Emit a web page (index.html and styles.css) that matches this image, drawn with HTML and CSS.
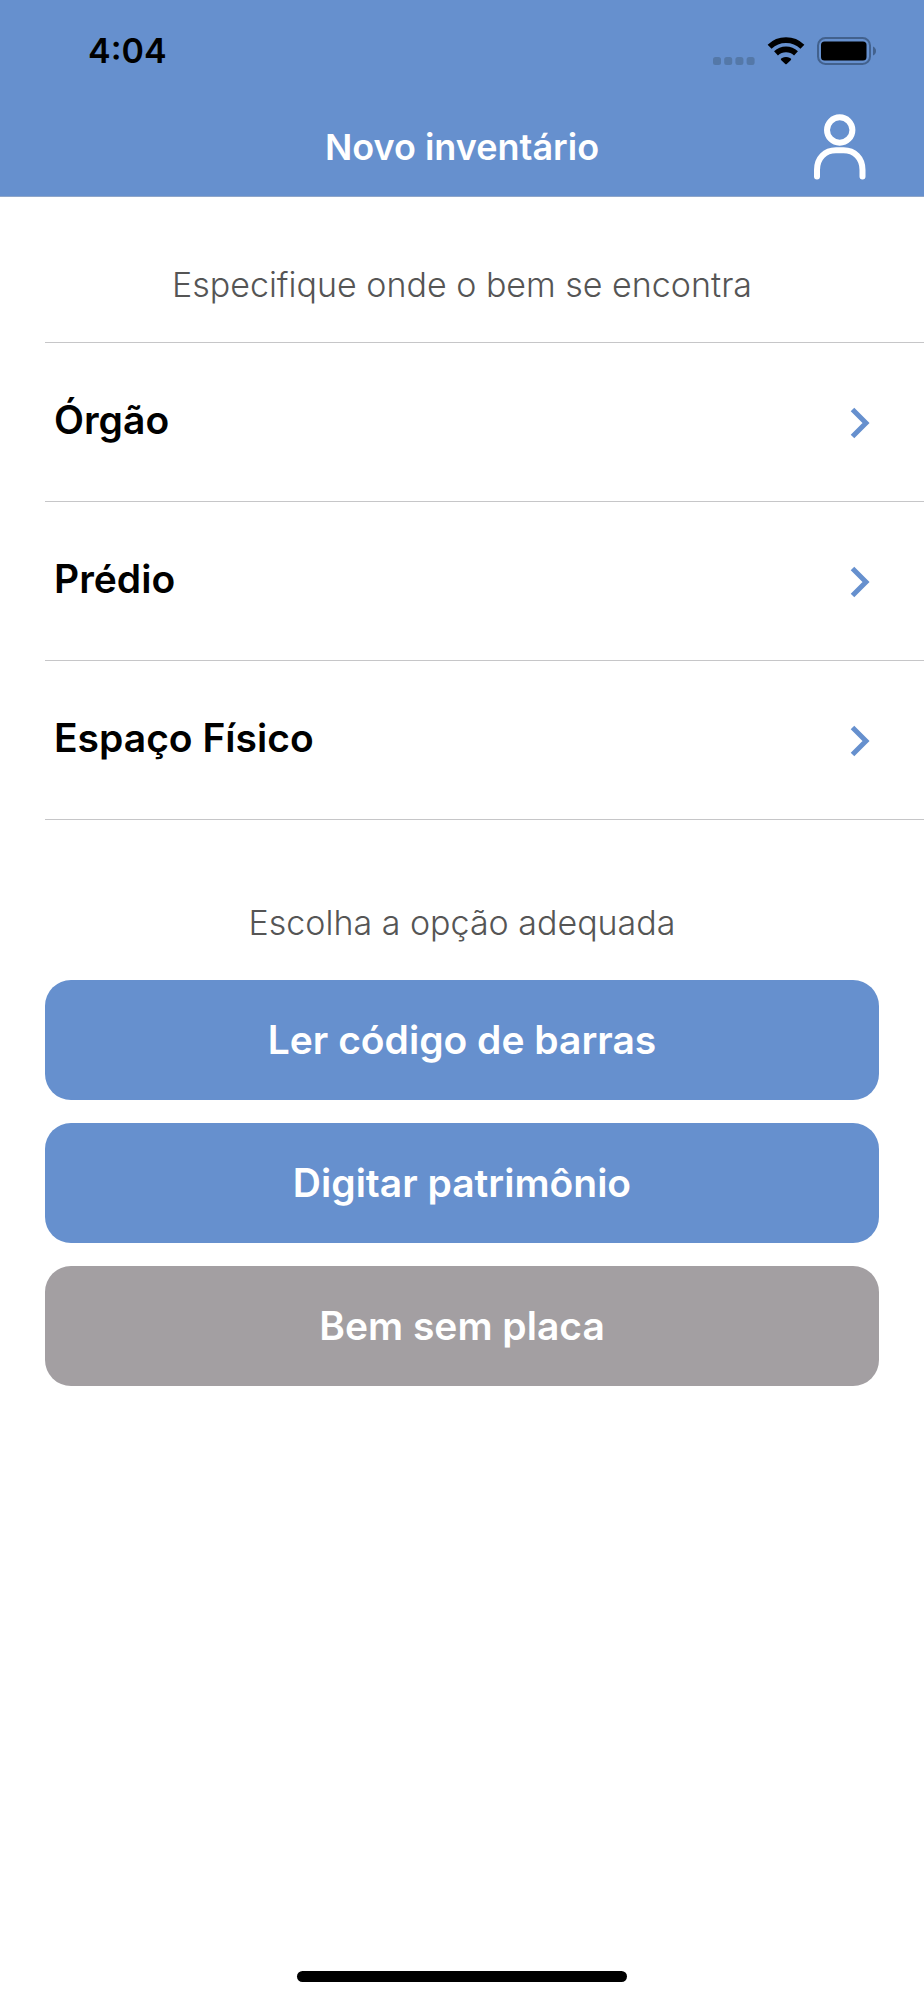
FILE: index.html
```
<!DOCTYPE html>
<html lang="pt-BR">
<head>
<meta charset="utf-8">
<meta name="viewport" content="width=device-width, initial-scale=1">
<title>Novo inventário</title>
<link rel="stylesheet" href="styles.css">
</head>
<body>
<header class="header">
  <div class="status">
    <time class="clock">4:04</time>
    <div class="indicators">
      <svg class="dots" width="42" height="8" viewBox="0 0 42 8" aria-hidden="true"><rect width="8" height="8" rx="2.5"/><rect x="11.2" width="8" height="8" rx="2.5"/><rect x="22.4" width="8" height="8" rx="2.5"/><rect x="33.6" width="8" height="8" rx="2.5"/></svg>
      <svg class="wifi" width="38" height="28" viewBox="0 0 38 28" aria-hidden="true">
        <g fill="none" stroke="#000" stroke-width="5.6">
          <path d="M2.600 9.800a23.500 23.500 0 0 1 32.800 0"/>
          <path d="M9 16.400a14.500 14.500 0 0 1 20 0"/>
        </g>
        <path d="M13.800 22.100Q14.200 21.400 15 21Q19 19 23 21Q23.800 21.400 24.200 22.100Q24.200 22.700 23.700 23.200L19.700 27Q19 27.500 18.300 27L14.300 23.200Q13.800 22.700 13.800 22.100Z"/>
      </svg>
      <svg class="battery" width="60" height="28" viewBox="0 0 60 28" aria-hidden="true">
        <rect x="1" y="1" width="52" height="26" rx="7.500" fill="none" stroke="#42618d" stroke-width="2"/>
        <rect x="4" y="4.500" width="45.500" height="19" rx="3.500"/>
        <path d="M56 9.500Q59 11 59 14T56 18.500Z" fill="#42618d"/>
      </svg>
    </div>
  </div>
  <div class="nav">
    <h1 class="title">Novo inventário</h1>
    <button class="profile" type="button" aria-label="Perfil">
      <svg width="52" height="66" viewBox="0 0 52 66" fill="none" stroke="#fff" stroke-width="6" stroke-linecap="round" aria-hidden="true"><circle cx="25.700" cy="16" r="12.700"/><path d="M3 62.500V56C3 44 11 36.300 22 36.300H29.500C40.500 36.300 48.500 44 48.500 56V62.500"/></svg>
    </button>
  </div>
</header>
<main class="content">
  <section>
    <h2 class="caption">Especifique onde o bem se encontra</h2>
    <ul class="list">
      <li><button class="row" type="button"><span class="label">Órgão</span><svg class="chevron" width="20" height="32" viewBox="0 0 20 32" aria-hidden="true"><path d="M2.500 2.500L16 16L2.500 29.500"/></svg></button></li>
      <li><button class="row" type="button"><span class="label">Prédio</span><svg class="chevron" width="20" height="32" viewBox="0 0 20 32" aria-hidden="true"><path d="M2.500 2.500L16 16L2.500 29.500"/></svg></button></li>
      <li><button class="row" type="button"><span class="label">Espaço Físico</span><svg class="chevron" width="20" height="32" viewBox="0 0 20 32" aria-hidden="true"><path d="M2.500 2.500L16 16L2.500 29.500"/></svg></button></li>
    </ul>
  </section>
  <section class="options">
    <h2 class="caption">Escolha a opção adequada</h2>
    <div class="actions">
      <button class="action" type="button">Ler código de barras</button>
      <button class="action" type="button">Digitar patrimônio</button>
      <button class="action muted" type="button">Bem sem placa</button>
    </div>
  </section>
</main>
<footer class="footer"><div class="home"></div></footer>
</body>
</html>
```
FILE: styles.css
```
* { box-sizing: border-box; }
body {
  margin: 0;
  min-height: 100vh;
  display: flex;
  flex-direction: column;
  background: #fff;
  color: #000;
  font-family: Inter, "Liberation Sans", sans-serif;
}
h1, h2, ul { margin: 0; padding: 0; }
button {
  margin: 0;
  padding: 0;
  border: 0;
  background: none;
  color: inherit;
  font: inherit;
  cursor: pointer;
}
svg { display: block; }

.header {
  background: #6690ce;
  border-bottom: 1px solid #8fa6c9;
}
.status {
  display: flex;
  align-items: center;
  justify-content: space-between;
  height: 101px;
  padding: 0 47px 0 88px;
}
.clock {
  font-size: 34px;
  line-height: 44px;
  font-weight: 600;
}
.indicators {
  display: flex;
  align-items: flex-end;
  gap: 12px;
}
.dots { fill: #5478a8; }
.nav {
  display: grid;
  grid-template-columns: 1fr auto 1fr;
  align-items: center;
  height: 95px;
  padding: 0 58px 3px;
}
.title {
  grid-column: 2;
  color: #fff;
  font-size: 36px;
  line-height: 44px;
  font-weight: 600;
}
.profile { justify-self: end; }

.caption {
  padding: 66px 45px 35px;
  color: #555;
  font-size: 34px;
  line-height: 44px;
  font-weight: 300;
  text-align: center;
}
.list {
  margin-left: 45px;
  border-top: 1px solid #c6c6c8;
  list-style: none;
}
.row {
  display: flex;
  align-items: center;
  justify-content: space-between;
  width: 100%;
  height: 159px;
  padding: 2px 54px 0 9px;
  border-bottom: 1px solid #c6c6c8;
  text-align: left;
}
.label {
  padding-bottom: 6px;
  font-size: 39px;
  line-height: 48px;
  font-weight: 600;
}
.chevron {
  fill: none;
  stroke: #6690ce;
  stroke-width: 5;
}
.options { padding-top: 15px; }
.actions {
  display: flex;
  flex-direction: column;
  gap: 23px;
  padding: 0 45px;
}
.action {
  height: 120px;
  border-radius: 26px;
  background: #6690ce;
  color: #fff;
  font-size: 39px;
  line-height: 48px;
  font-weight: 600;
}
.muted { background: #a39fa2; }

.footer {
  display: flex;
  justify-content: center;
  margin-top: auto;
  padding: 40px 0 18px;
}
.home {
  width: 330px;
  height: 11px;
  border-radius: 6px;
  background: #000;
}
```
